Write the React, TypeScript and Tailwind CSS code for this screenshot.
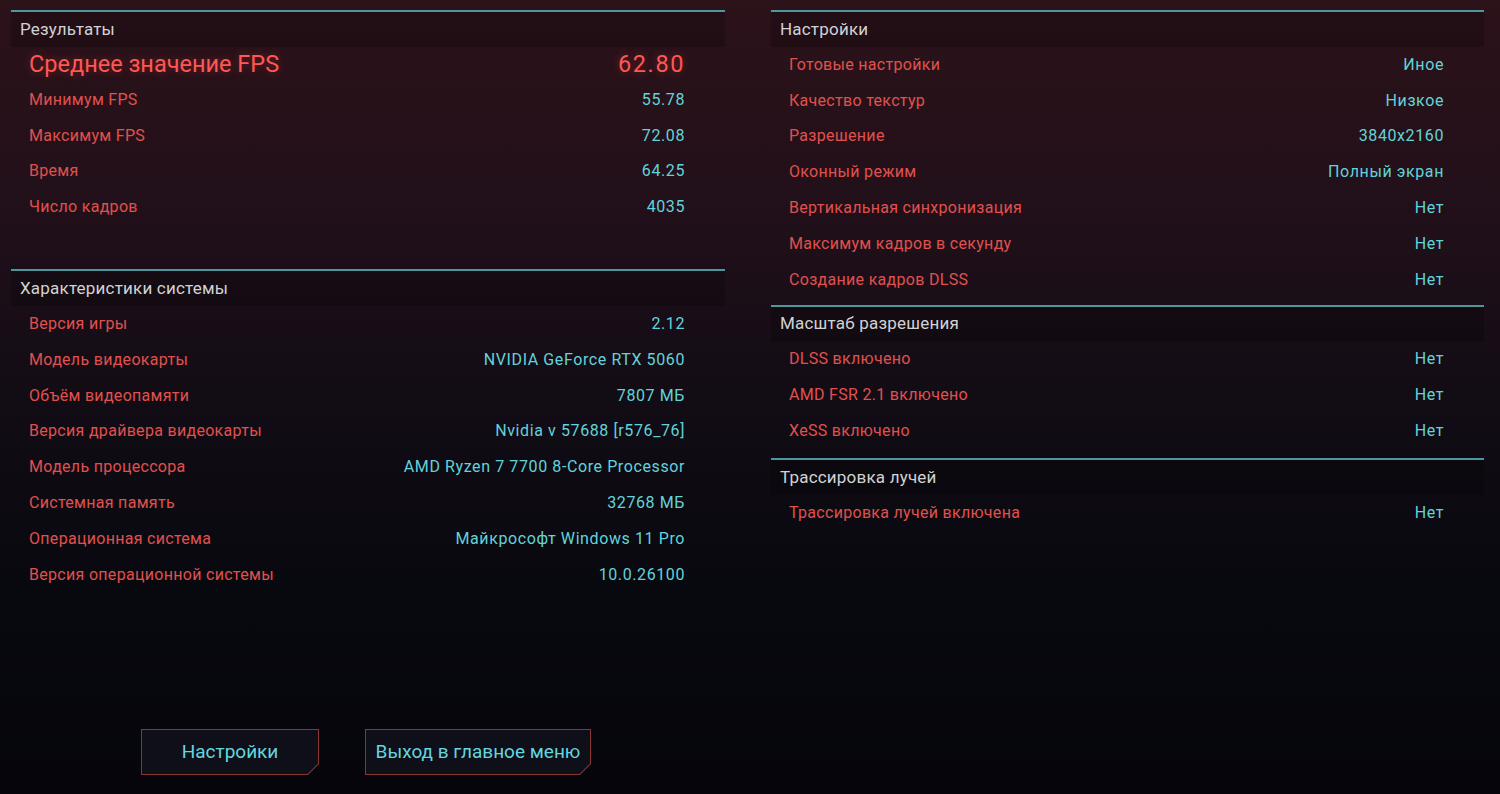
import React from "react"

type Row = [string, string]

const results: Row[] = [
  ["Минимум FPS", "55.78"],
  ["Максимум FPS", "72.08"],
  ["Время", "64.25"],
  ["Число кадров", "4035"],
]

const system: Row[] = [
  ["Версия игры", "2.12"],
  ["Модель видеокарты", "NVIDIA GeForce RTX 5060"],
  ["Объём видеопамяти", "7807 МБ"],
  ["Версия драйвера видеокарты", "Nvidia v 57688 [r576_76]"],
  ["Модель процессора", "AMD Ryzen 7 7700 8-Core Processor"],
  ["Системная память", "32768 МБ"],
  ["Операционная система", "Майкрософт Windows 11 Pro"],
  ["Версия операционной системы", "10.0.26100"],
]

const settings: Row[] = [
  ["Готовые настройки", "Иное"],
  ["Качество текстур", "Низкое"],
  ["Разрешение", "3840x2160"],
  ["Оконный режим", "Полный экран"],
  ["Вертикальная синхронизация", "Нет"],
  ["Максимум кадров в секунду", "Нет"],
  ["Создание кадров DLSS", "Нет"],
]

const scaling: Row[] = [
  ["DLSS включено", "Нет"],
  ["AMD FSR 2.1 включено", "Нет"],
  ["XeSS включено", "Нет"],
]

const rays: Row[] = [["Трассировка лучей включена", "Нет"]]

function Section({ title, rows, children }: { title: string; rows: Row[]; children?: React.ReactNode }) {
  return (
    <div className="border-t-2 border-[#4f969c]">
      {/* header band */}
      <div className="h-[35px] flex items-center pl-[9px] bg-black/20 text-[17px] tracking-[0.2px] text-[#d2d2d4]">
        {title}
      </div>
      {children}
      {rows.map(([label, value]) => (
        <div key={label} className="h-[35.8px] flex items-center justify-between pl-[18px] pr-[40px] text-[16px]">
          <span className="text-[#e0514e] tracking-[0.3px]">{label}</span>
          <span className="text-[#62d3da] tracking-[0.6px]">{value}</span>
        </div>
      ))}
    </div>
  )
}

function CutButton({ label, width }: { label: string; width: string }) {
  return (
    <div
      className={`${width} h-[46px] bg-[#8a3434] p-px [clip-path:polygon(0_0,100%_0,100%_calc(100%_-_11px),calc(100%_-_11px)_100%,0_100%)]`}
    >
      <div className="h-full w-full bg-[#0f0f1a] flex items-center justify-center text-[19px] text-[#64d6dd] [clip-path:polygon(0_0,100%_0,100%_calc(100%_-_10.5px),calc(100%_-_10.5px)_100%,0_100%)]">
        {label}
      </div>
    </div>
  )
}

export default function App() {
  return (
    <div
      className="h-[794px] w-[1500px] overflow-hidden bg-[linear-gradient(180deg,#2c1219_0%,#22101a_25%,#120c15_50%,#08080f_75%,#05050b_100%)] pt-[10px] flex gap-[46px] pl-[11px] font-['Roboto','Noto_Sans',sans-serif]"
    >
      {/* Left column */}
      <div className="w-[714px] flex flex-col">
        <Section title="Результаты" rows={results}>
          <div className="h-[35px] flex items-center justify-between pl-[18px] pr-[40px] text-[23.5px] text-[#ff5753] [text-shadow:0_0_8px_rgba(255,70,70,0.35)]">
            <span>Среднее значение FPS</span>
            <span className="tracking-[1.6px]">62.80</span>
          </div>
        </Section>

        <div className="mt-[44px]">
          <Section title="Характеристики системы" rows={system} />
        </div>

        <div className="mt-auto mb-[19px] flex justify-center gap-[46px] pr-[4px]">
          <CutButton label="Настройки" width="w-[178px]" />
          <CutButton label="Выход в главное меню" width="w-[226px]" />
        </div>
      </div>

      {/* Right column */}
      <div className="w-[713px] flex flex-col gap-[7px]">
        <Section title="Настройки" rows={settings} />
        <Section title="Масштаб разрешения" rows={scaling} />
        <div className="mt-[2px]">
          <Section title="Трассировка лучей" rows={rays} />
        </div>
      </div>
    </div>
  )
}
